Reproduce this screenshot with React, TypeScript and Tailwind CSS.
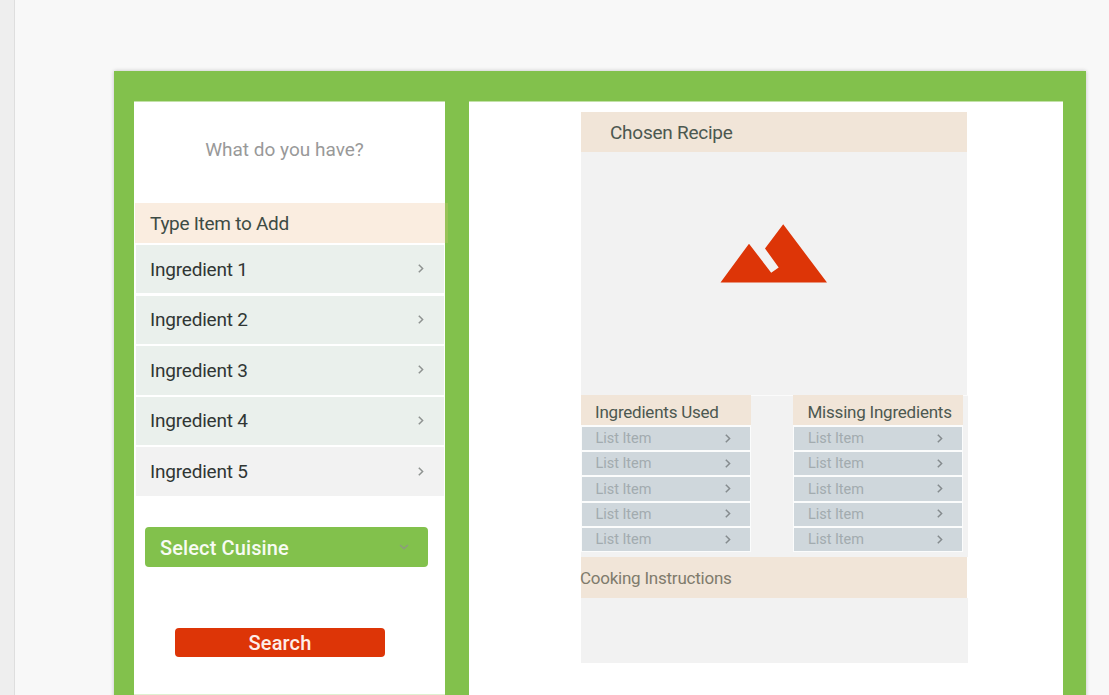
import React from "react";

const ingredients = ["Ingredient 1", "Ingredient 2", "Ingredient 3", "Ingredient 4", "Ingredient 5"];
const listItems = ["List Item", "List Item", "List Item", "List Item", "List Item"];

function Chevron({ className }: { className: string }) {
  return (
    <svg viewBox="0 0 6 9" fill="none" stroke="currentColor" className={className}>
      <path d="M0.8 0.8 L4.6 4.5 L0.8 8.2" strokeWidth="1.5" />
    </svg>
  );
}

function IngredientList() {
  return (
    <ul className="ml-[2px] mr-[1px] mt-[2px] flex flex-col gap-[2.2px]">
      {ingredients.map((name, i) => (
        <li
          key={name}
          className={`flex h-[48.4px] items-center justify-between pl-[14px] pr-[20px] text-[19px] text-[#303634] ${
            i === 4 ? "bg-[#f2f2f2]" : "bg-[#eaf0ec]"
          }`}
        >
          <span className="pt-[1.4px] tracking-[-0.2px]">{name}</span>
          <Chevron className="mb-px h-[9px] w-[6px] text-[#8f9391]" />
        </li>
      ))}
    </ul>
  );
}

function ItemColumn({ title }: { title: string }) {
  return (
    <div className="w-[170px]">
      <h3 className="flex h-[30px] items-center whitespace-nowrap bg-[#f1e5d8] pl-[14.5px] pt-[5px] text-[17px] text-[#4c5850]">
        <span className="tracking-[-0.22px]">{title}</span>
      </h3>
      <ul className="flex flex-col gap-[2px] bg-[#fbfcfc] pb-px pl-px pr-px pt-[2px]">
        {listItems.map((item, i) => (
          <li
            key={i}
            className="flex h-[23.25px] items-center justify-between bg-[#cfd7dc] pl-[14px] pr-[19px] text-[14.5px] text-[#a2abaf]"
          >
            <span className="pt-px tracking-[-0.04px]">{item}</span>
            <Chevron className="mb-px h-[9px] w-[6px] text-[#858b8e]" />
          </li>
        ))}
      </ul>
    </div>
  );
}

function SearchPanel() {
  return (
    <section className="h-[594px] w-[311px] border-b border-t border-b-[#dff0d0] border-t-[#c2e1a8] bg-white">
      <h1 className="flex h-[101px] items-center justify-center pb-[4px] pr-[10px] text-[19px] text-[#999999]">
        <span className="tracking-[0.01px]">What do you have?</span>
      </h1>
      <div className="relative ml-px flex h-[40px] w-[310px] items-center bg-[#faede0] pl-[15px] pt-[2px] text-[19px] text-[#3d4b44]">
        <span className="tracking-[-0.28px]">Type Item to Add</span>
        <div className="absolute left-full top-0 h-full w-[3px] bg-[#98c258]" />
      </div>
      <IngredientList />
      <button className="ml-[11px] mt-[31px] flex h-[40px] w-[283px] items-center justify-between rounded-[4px] bg-[#82c14c] pl-[15px] pr-[19px] text-[20px] font-medium text-[#f7fbf3]">
        <span className="pt-[2px] tracking-[0.12px]">Select Cuisine</span>
        <svg viewBox="0 0 10 6" fill="none" className="h-[6px] w-[10px]">
          <path d="M1 1 L5 4.6 L9 1" stroke="#8c9d7c" strokeWidth="1.6" />
        </svg>
      </button>
      <button className="ml-[41px] mt-[61px] flex h-[29px] w-[210px] items-center justify-center rounded-[4px] bg-[#dd3507] text-[20px] font-medium text-[#fdeee9]">
        <span className="pt-px tracking-[0.15px]">Search</span>
      </button>
    </section>
  );
}

function RecipePanel() {
  return (
    <section className="ml-[24px] h-[700px] w-[594px] border-t border-[#c2e1a8] bg-white pl-[111.5px] pt-[10px]">
      <h2 className="flex h-[40.4px] w-[386.5px] items-center bg-[#f1e5d8] pl-[29.5px] pt-[1.6px] text-[19px] text-[#4c5850]">
        <span className="tracking-[-0.25px]">Chosen Recipe</span>
      </h2>
      <div className="h-[242.6px] w-[386.5px] bg-[#f2f2f2] pl-[139px] pt-[71.6px]">
        <svg viewBox="0 0 108 60" className="h-[60px] w-[108px]" fill="#dd3507">
          <path d="M0.5 58.5 L29 19.7 L51.2 48.7 L58.7 43.4 L45 24.5 L63.2 0.3 L107 58.5 Z" />
        </svg>
      </div>
      <div className="h-[162px] w-[387px] border-t border-[#fbfbfb] bg-[#f2f2f2]">
        <div className="-mt-px flex gap-[42.5px]">
          <ItemColumn title="Ingredients Used" />
          <ItemColumn title="Missing Ingredients" />
        </div>
      </div>
      <h2 className="flex h-[41px] w-[386.5px] items-center bg-[#f1e5d8] pt-[3px] text-[17px] text-[#7f7b6c]">
        <span className="-ml-[0.6px] tracking-[-0.23px]">Cooking Instructions</span>
      </h2>
      <div className="h-[65.5px] w-[387px] bg-[#f2f2f2]" />
    </section>
  );
}

export default function App() {
  return (
    <div className="flex h-[695px] w-[1109px] overflow-hidden bg-[#f8f8f8] font-['Roboto',sans-serif]">
      <aside className="h-full w-[15px] shrink-0 border-r border-[#dedede] bg-[#eeeeee]" />
      <main className="ml-[99px] mt-[71px] flex h-[740px] w-[972px] shrink-0 bg-[#82c14c] pl-[20px] pt-[30px] shadow-[0_0_4px_rgba(0,0,0,0.22)]">
        <SearchPanel />
        <RecipePanel />
      </main>
    </div>
  );
}
